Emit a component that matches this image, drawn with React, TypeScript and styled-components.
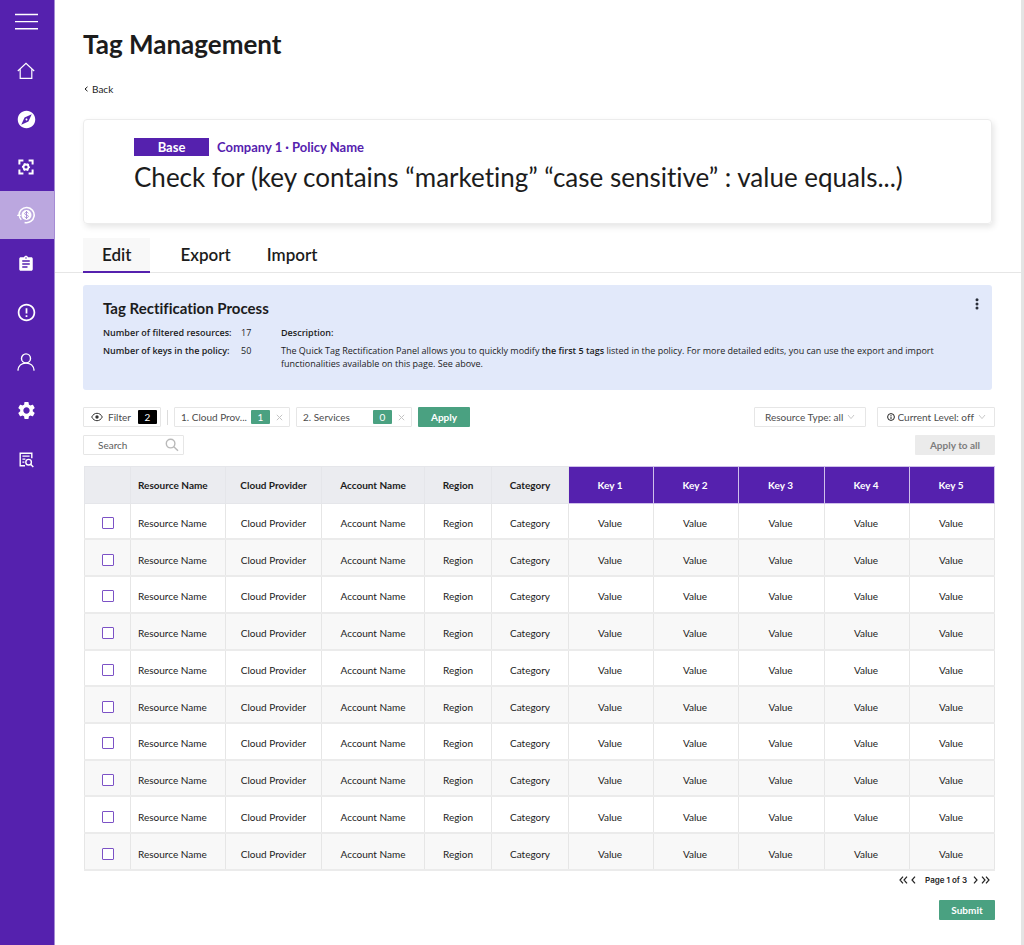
import React from "react";
import styled, { createGlobalStyle, css } from "styled-components";
import { MdAssignment, MdErrorOutline, MdExplore, MdSettings } from "react-icons/md";

const purple = "#5521ae";
const green = "#4aa181";
const ink = "#1c1c1c";
const line = "#e6e6e6";

const GlobalStyle = createGlobalStyle`
  *, *::before, *::after { box-sizing: border-box; }
  body {
    margin: 0;
    background: #fff;
    color: ${ink};
    font-family: Lato, "Open Sans", sans-serif;
    font-size: 10px;
    line-height: 14px;
    font-variant-ligatures: none;
  }
  button, input, select { font: inherit; color: inherit; }
  button { cursor: pointer; }
  h1, h2, h3, p, dl, dd { margin: 0; }
`;

const Page = styled.div`
  display: flex;
  min-height: 100vh;
`;

/* ---------- sidebar ---------- */

const Sidebar = styled.nav`
  flex: none;
  width: 55px;
  background: ${purple};
  border-right: 1px solid #a58bd4;
  color: #fff;
`;

const MenuButton = styled.button`
  display: flex;
  align-items: center;
  justify-content: center;
  width: 100%;
  height: 47px;
  padding: 0 2px 4px 0;
  border: 0;
  background: none;
  color: #fff;
`;

const NavGroup = styled.div<{ $row: number }>`
  display: grid;
  grid-auto-rows: ${(p) => p.$row}px;
`;

const NavLink = styled.a<{ $active?: boolean }>`
  display: flex;
  align-items: center;
  justify-content: center;
  padding-right: 2px;
  color: #fff;
  background: ${(p) => (p.$active ? "#bba7df" : "transparent")};
`;

/* ---------- main column ---------- */

const Main = styled.main`
  flex: 1;
  min-width: 0;
  padding: 28px 0 24px;
  border-right: 3px solid #e4e4e4;
`;

const Section = styled.section`
  padding: 0 26px 0 28px;
`;

const Title = styled.h1`
  font-size: 26px;
  line-height: 32px;
  font-weight: 700;
`;

const BackLink = styled.a`
  display: inline-flex;
  align-items: center;
  gap: 4px;
  margin: 22px 0 23px 1px;
  color: ${ink};
  text-decoration: none;
`;

const PolicyCard = styled.div`
  margin-right: 3px;
  padding: 17px 50px 30px;
  border: 1px solid #ececec;
  border-radius: 4px;
  box-shadow: 2px 3px 6px rgba(0, 0, 0, 0.1);
`;

const PolicyMeta = styled.div`
  display: flex;
  align-items: center;
  gap: 8px;
  height: 19px;
  margin-bottom: 5px;
  color: ${purple};
  font-size: 13px;
  font-weight: 700;
`;

const LevelBadge = styled.span`
  width: 75px;
  line-height: 18px;
  background: ${purple};
  color: #fff;
  text-align: center;
`;

const PolicyRule = styled.h2`
  font-size: 26px;
  line-height: 32px;
  font-weight: 400;
`;

const Tabs = styled.div`
  display: flex;
  margin: 14px 0 12px;
  padding-left: 28px;
  border-bottom: 1px solid ${line};
`;

const Tab = styled.button<{ $active?: boolean }>`
  height: 35px;
  margin-bottom: -1px;
  padding: 0 18px;
  border: 0;
  border-bottom: 2px solid transparent;
  background: none;
  font-size: 17px;
  font-weight: 600;
  ${(p) =>
    p.$active &&
    css`
      margin-right: 12px;
      padding: 0 19px;
      background: #f8f8f8;
      border-color: ${purple};
    `}
`;

/* ---------- rectification panel ---------- */

const InfoPanel = styled.div`
  display: flex;
  justify-content: space-between;
  min-height: 105px;
  margin-right: 3px;
  padding: 13px 10px 19px 20px;
  border-radius: 3px;
  background: #e2e9fa;
`;

const InfoTitle = styled.h3`
  font-size: 15px;
  line-height: 20px;
  font-weight: 700;
`;

const InfoBody = styled.div`
  display: flex;
  margin-top: 8px;
  font-family: "Open Sans", sans-serif;
  font-size: 9px;
  line-height: 13px;
`;

const Stats = styled.dl`
  display: grid;
  grid-template-columns: 138px 40px;
  align-content: start;
  row-gap: 5px;

  dt { font-weight: 600; }
`;

const Description = styled.div`
  flex: 1;
  max-width: 672px;

  h4 { margin: 0 0 5px; font-weight: 600; }
  b { font-weight: 600; }
`;

const MoreButton = styled.button`
  flex: none;
  align-self: flex-start;
  display: flex;
  padding: 0;
  border: 0;
  background: none;
`;

/* ---------- toolbar ---------- */

const Toolbar = styled.div<{ $top: number }>`
  display: flex;
  align-items: center;
  justify-content: space-between;
  margin-top: ${(p) => p.$top}px;
`;

const Group = styled.div<{ $gap: number }>`
  display: flex;
  align-items: center;
  gap: ${(p) => p.$gap}px;
`;

const boxed = css`
  display: flex;
  align-items: center;
  height: 20px;
  border: 1px solid ${line};
  border-radius: 1px;
  background: #fff;
  color: #4c4c4c;
`;

const FilterButton = styled.button`
  ${boxed}
  gap: 5px;
  width: 78px;
  padding: 0 3px 0 7px;
`;

const Divider = styled.span`
  width: 1px;
  height: 15px;
  background: #dcdcdc;
`;

const Chip = styled.div`
  ${boxed}
  justify-content: space-between;
  width: 116px;
  padding: 0 6px;
`;

const ChipEnd = styled.span`
  display: flex;
  align-items: center;
  gap: 6px;
`;

const Count = styled.span<{ $dark?: boolean }>`
  width: 19px;
  margin-left: ${(p) => (p.$dark ? "auto" : "0")};
  border-radius: 1px;
  background: ${(p) => (p.$dark ? "#000" : green)};
  color: #fff;
  text-align: center;
`;

const ClearButton = styled.button`
  display: flex;
  padding: 0;
  border: 0;
  background: none;
  color: #c4c4c4;
`;

const Button = styled.button<{ $muted?: boolean; $width: number }>`
  width: ${(p) => p.$width}px;
  height: 20px;
  padding: 0;
  border: 0;
  border-radius: 1px;
  background: ${(p) => (p.$muted ? "#ebebeb" : green)};
  color: ${(p) => (p.$muted ? "#7d7d7d" : "#fff")};
  font-weight: 700;
`;

const SelectBox = styled.label<{ $width: number }>`
  ${boxed}
  justify-content: center;
  gap: 3px;
  width: ${(p) => p.$width}px;

  select {
    appearance: none;
    padding: 0;
    border: 0;
    background: none;
    outline: none;
  }
`;

const SearchBox = styled.label`
  ${boxed}
  width: 101px;
  padding: 0 4px 0 14px;

  input {
    flex: 1;
    min-width: 0;
    padding: 0;
    border: 0;
    background: none;
    outline: none;
  }
  input::placeholder { color: #5c5c5c; opacity: 1; }
`;

/* ---------- table ---------- */

const Table = styled.table`
  table-layout: fixed;
  width: calc(100% - 2px);
  height: 405px;
  margin: 11px 0 0 1px;
  border-collapse: collapse;
  text-align: center;
`;

const HeadCell = styled.th<{ $key?: boolean; $start?: boolean }>`
  padding: ${(p) => (p.$start ? "0 0 0 7px" : p.$key ? "0 2px 0 0" : "0")};
  border: 1px solid ${(p) => (p.$key ? "#cfc0ea" : "#e5e6ea")};
  background: ${(p) => (p.$key ? purple : "#ebecf0")};
  color: ${(p) => (p.$key ? "#fff" : ink)};
  font-weight: 700;
  text-align: ${(p) => (p.$start ? "left" : "center")};
`;

const BodyRow = styled.tr`
  border-bottom: 2px solid #ebebeb;
  &:nth-child(even) { background: #f8f8f8; }
`;

const Cell = styled.td<{ $key?: boolean; $start?: boolean }>`
  padding: ${(p) => (p.$start ? "4px 0 0 7px" : p.$key ? "4px 2px 0 0" : "4px 0 0")};
  border-left: 1px solid ${line};
  border-right: 1px solid ${line};
  text-align: ${(p) => (p.$start ? "left" : "center")};
`;

const Checkbox = styled.input`
  appearance: none;
  display: block;
  width: 12px;
  height: 12px;
  margin: 0 auto;
  border: 1px solid #7c52c6;
  border-radius: 1px;
  background: #fff;
  &:checked { background: ${purple}; }
`;

const Footer = styled.div`
  display: flex;
  flex-direction: column;
  align-items: flex-end;
  gap: 13px;
  margin-top: 2px;
`;

const Pager = styled.div`
  display: flex;
  align-items: center;
  gap: 3px;
  padding-right: 5px;
  font-family: Inter, sans-serif;
  font-size: 8px;
  font-weight: 600;

  span { padding: 0 3px 0 6px; }
`;

const PagerButton = styled.button`
  display: flex;
  padding: 0;
  border: 0;
  background: none;
`;

/* ---------- icons ---------- */

const MenuIcon = () => (
  <svg width="23" height="17" viewBox="0 0 23 17" stroke="currentColor" strokeWidth="1.4">
    <path d="M0 1.5h23M0 8.6h23M0 15.7h23" />
  </svg>
);

const HomeIcon = () => (
  <svg width="18" height="18" viewBox="0 0 18 18" fill="none" stroke="currentColor" strokeWidth="1.2">
    <path d="M.8 9 9 1.4 17.2 9M3.2 7v9.4h11.6V7" />
  </svg>
);

const FocusGearIcon = () => (
  <svg width="16" height="16" viewBox="0 0 16 16" fill="none" stroke="currentColor" strokeWidth="2">
    <path d="M1.4 5.4V1.4h4M10.6 1.4h4v4M14.6 10.6v4h-4M5.4 14.6h-4v-4" />
    <circle cx="8" cy="8" r="2.5" strokeWidth="1.8" />
    <circle cx="8" cy="8" r="3.5" strokeWidth="1.2" strokeDasharray="1.8 1.86" strokeDashoffset=".9" />
  </svg>
);

const SpendIcon = () => (
  <svg width="18" height="18" viewBox="0 0 18 18" fill="none" stroke="currentColor">
    <path d="M2 9.600A7.600 7.600 0 1 1 7.600 16.400" strokeWidth="1.6" />
    <path d="M.2 9.400h3.600M2.300 10.200c.3 1.400 1 2.600 2 3.600" strokeWidth="1.4" />
    <circle cx="9.500" cy="9" r="5" fill="currentColor" stroke="none" />
    <path
      d="M11.400 7.300c-.4-.7-1.100-1-1.900-1-1 0-1.800.5-1.800 1.300 0 1.900 3.700.9 3.700 2.800 0 .8-.8 1.300-1.900 1.300-.9 0-1.600-.3-2-1M9.500 5v8"
      stroke="#a98fd6"
      strokeWidth="1"
    />
  </svg>
);

const UserIcon = () => (
  <svg width="18" height="18" viewBox="0 0 18 18" fill="none" stroke="currentColor" strokeWidth="1.4">
    <circle cx="9" cy="5.4" r="4.5" />
    <path d="M.9 17.6c.3-4.6 3.7-7.5 8.1-7.5s7.8 2.9 8.1 7.5" />
  </svg>
);

const DocSearchIcon = () => (
  <svg width="15" height="16" viewBox="0 0 15 16" fill="none" stroke="currentColor" strokeWidth="1.4">
    <path d="M6 13.7H1.2V1.3h11.6v5" />
    <path d="M3.4 4.2h7.2M3.4 7.2h3M3.4 10.2h2" strokeWidth="1.2" />
    <circle cx="9.6" cy="10.2" r="2.8" />
    <path d="m11.6 12.2 2.7 2.9" />
  </svg>
);

const EyeIcon = () => (
  <svg width="12" height="10" viewBox="0 0 12 10" fill="none" stroke="#333">
    <path d="M.7 5C2 2.5 3.8 1.3 6 1.3S10 2.5 11.3 5C10 7.5 8.2 8.7 6 8.7S2 7.5.7 5Z" />
    <circle cx="6" cy="5" r="1.7" fill="#333" stroke="none" />
  </svg>
);

const CloseIcon = () => (
  <svg width="7" height="7" viewBox="0 0 7 7" stroke="currentColor">
    <path d="m.8.8 5.4 5.4M6.2.8.8 6.2" />
  </svg>
);

const SearchIcon = () => (
  <svg width="14" height="14" viewBox="0 0 14 14" fill="none" stroke="#b9b9b9" strokeWidth="1.4">
    <circle cx="5.6" cy="5.6" r="4.3" />
    <path d="m8.8 8.8 4.2 4" />
  </svg>
);

const ChevronDown = () => (
  <svg width="8" height="6" viewBox="0 0 8 6" fill="none" stroke="#c9c9c9">
    <path d="m1 1 3 3.6L7 1" />
  </svg>
);

const InfoIcon = () => (
  <svg width="8" height="8" viewBox="0 0 8 8" fill="none" stroke="#222">
    <circle cx="4" cy="4" r="3.4" />
    <path d="M4 3.5V6M4 2v.9" />
  </svg>
);

const MoreIcon = () => (
  <svg width="10" height="12" viewBox="0 0 10 12" fill="#2a2f3a">
    <circle cx="5" cy="1.8" r="1.5" />
    <circle cx="5" cy="5.9" r="1.5" />
    <circle cx="5" cy="10" r="1.5" />
  </svg>
);

const BackIcon = () => (
  <svg width="4" height="6" viewBox="0 0 4 6" fill="none" stroke="currentColor">
    <path d="M3.5.8 1 3l2.5 2.2" />
  </svg>
);

const chevrons = {
  first: { width: 9, d: "M4 .6 1 4l3 3.4M8 .6 5 4l3 3.4" },
  prev: { width: 5, d: "M4 .6 1 4l3 3.4" },
  next: { width: 5, d: "m1 .6 3 3.4-3 3.4" },
  last: { width: 9, d: "m1 .6 3 3.4-3 3.4M5 .6 8 4 5 7.4" },
};

const PagerIcon = ({ kind }: { kind: keyof typeof chevrons }) => (
  <svg width={chevrons[kind].width} height="8" viewBox={`0 0 ${chevrons[kind].width} 8`} fill="none" stroke="#222" strokeWidth="1.2">
    <path d={chevrons[kind].d} />
  </svg>
);

/* ---------- data ---------- */

const columnWidths = [46, 95, 96, 103, 67, 77, 85, 85, 86, 85, 85];
const fields = ["Resource Name", "Cloud Provider", "Account Name", "Region", "Category"];
const keys = ["Key 1", "Key 2", "Key 3", "Key 4", "Key 5"];
const rows = Array.from({ length: 10 }, (_, i) => i + 1);

const Col = styled.col<{ $share: number }>`
  width: ${(p) => p.$share}px;
`;

const HeadRow = styled.tr`
  height: 37px;
`;

export default function App() {
  return (
    <Page>
      <GlobalStyle />
      <Sidebar aria-label="Primary">
        <MenuButton aria-label="Menu"><MenuIcon /></MenuButton>
        <NavGroup $row={48}>
          <NavLink href="#home" aria-label="Home"><HomeIcon /></NavLink>
          <NavLink href="#explore" aria-label="Explore"><MdExplore size={21} /></NavLink>
          <NavLink href="#automation" aria-label="Automation"><FocusGearIcon /></NavLink>
          <NavLink href="#costs" aria-label="Costs" $active><SpendIcon /></NavLink>
        </NavGroup>
        <NavGroup $row={49}>
          <NavLink href="#policies" aria-label="Policies"><MdAssignment size={18} /></NavLink>
          <NavLink href="#alerts" aria-label="Alerts"><MdErrorOutline size={21} /></NavLink>
          <NavLink href="#account" aria-label="Account"><UserIcon /></NavLink>
          <NavLink href="#settings" aria-label="Settings"><MdSettings size={21} /></NavLink>
          <NavLink href="#reports" aria-label="Reports"><DocSearchIcon /></NavLink>
        </NavGroup>
      </Sidebar>

      <Main>
        <Section>
          <Title>Tag Management</Title>
          <BackLink href="#back"><BackIcon />Back</BackLink>
          <PolicyCard>
            <PolicyMeta>
              <LevelBadge>Base</LevelBadge>
              <span>Company 1 · Policy Name</span>
            </PolicyMeta>
            <PolicyRule>Check for (key contains “marketing” “case sensitive” : value equals...)</PolicyRule>
          </PolicyCard>
        </Section>

        <Tabs role="tablist">
          <Tab role="tab" aria-selected $active>Edit</Tab>
          <Tab role="tab">Export</Tab>
          <Tab role="tab">Import</Tab>
        </Tabs>

        <Section>
          <InfoPanel>
            <div>
              <InfoTitle>Tag Rectification Process</InfoTitle>
              <InfoBody>
                <Stats>
                  <dt>Number of filtered resources:</dt>
                  <dd>17</dd>
                  <dt>Number of keys in the policy:</dt>
                  <dd>50</dd>
                </Stats>
                <Description>
                  <h4>Description:</h4>
                  <p>
                    The Quick Tag Rectification Panel allows you to quickly modify <b>the first 5 tags</b> listed in the
                    policy. For more detailed edits, you can use the export and import functionalities available on this
                    page. See above.
                  </p>
                </Description>
              </InfoBody>
            </div>
            <MoreButton aria-label="More options"><MoreIcon /></MoreButton>
          </InfoPanel>

          <Toolbar $top={17}>
            <Group $gap={6}>
              <FilterButton><EyeIcon />Filter<Count $dark>2</Count></FilterButton>
              <Divider />
              <Chip>
                1. Cloud Prov...
                <ChipEnd><Count>1</Count><ClearButton aria-label="Remove Cloud Provider"><CloseIcon /></ClearButton></ChipEnd>
              </Chip>
              <Chip>
                2. Services
                <ChipEnd><Count>0</Count><ClearButton aria-label="Remove Services"><CloseIcon /></ClearButton></ChipEnd>
              </Chip>
              <Button $width={52}>Apply</Button>
            </Group>
            <Group $gap={11}>
              <SelectBox $width={112}>
                <select aria-label="Resource Type"><option>Resource Type: all</option></select>
                <ChevronDown />
              </SelectBox>
              <SelectBox $width={118}>
                <InfoIcon />
                <select aria-label="Current Level"><option>Current Level: off</option></select>
                <ChevronDown />
              </SelectBox>
            </Group>
          </Toolbar>

          <Toolbar $top={8}>
            <SearchBox>
              <input type="text" placeholder="Search" aria-label="Search" />
              <SearchIcon />
            </SearchBox>
            <Button $width={80} $muted>Apply to all</Button>
          </Toolbar>

          <Table>
            <colgroup>
              {columnWidths.map((w, i) => <Col key={i} $share={w} />)}
            </colgroup>
            <thead>
              <HeadRow>
                <HeadCell aria-label="Select" />
                {fields.map((f, i) => <HeadCell key={f} scope="col" $start={i === 0}>{f}</HeadCell>)}
                {keys.map((k) => <HeadCell key={k} scope="col" $key>{k}</HeadCell>)}
              </HeadRow>
            </thead>
            <tbody>
              {rows.map((r) => (
                <BodyRow key={r}>
                  <Cell><Checkbox type="checkbox" aria-label={`Select row ${r}`} /></Cell>
                  {fields.map((f, i) => <Cell key={f} $start={i === 0}>{f}</Cell>)}
                  {keys.map((k) => <Cell key={k} $key>Value</Cell>)}
                </BodyRow>
              ))}
            </tbody>
          </Table>

          <Footer>
            <Pager>
              <PagerButton aria-label="First page"><PagerIcon kind="first" /></PagerButton>
              <PagerButton aria-label="Previous page"><PagerIcon kind="prev" /></PagerButton>
              <span>Page 1 of 3</span>
              <PagerButton aria-label="Next page"><PagerIcon kind="next" /></PagerButton>
              <PagerButton aria-label="Last page"><PagerIcon kind="last" /></PagerButton>
            </Pager>
            <Button $width={56}>Submit</Button>
          </Footer>
        </Section>
      </Main>
    </Page>
  );
}
